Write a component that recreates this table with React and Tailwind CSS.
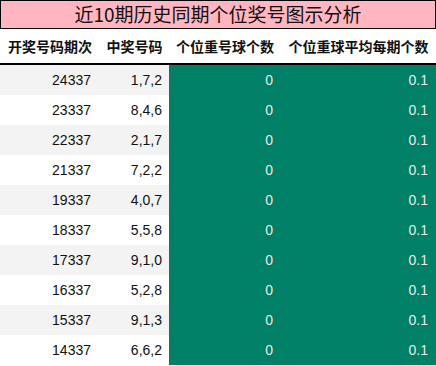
const rows = [
  ['24337', '1,7,2'],
  ['23337', '8,4,6'],
  ['22337', '2,1,7'],
  ['21337', '7,2,2'],
  ['19337', '4,0,7'],
  ['18337', '5,5,8'],
  ['17337', '9,1,0'],
  ['16337', '5,2,8'],
  ['15337', '9,1,3'],
  ['14337', '6,6,2'],
]

export default function App() {
  return (
    <div className="w-[436px] h-[366px] bg-white overflow-hidden" style={{ fontFamily: '"Liberation Sans", "Noto Sans CJK SC", sans-serif' }}>
      <div
        className="h-[29px] border border-black bg-[#ffb6c1] flex items-center justify-center text-[19px] text-[#111]"
        style={{ fontFamily: '"Noto Sans CJK SC", sans-serif' }}
      >
        近10期历史同期个位奖号图示分析
      </div>

      <div
        className="grid grid-cols-[100px_69px_112px_1fr] h-[36px] border-b-2 border-black text-[14px] font-bold text-[#111] items-center text-center"
        style={{ fontFamily: '"Noto Sans CJK SC", sans-serif' }}
      >
        <div>开奖号码期次</div>
        <div>中奖号码</div>
        <div>个位重号球个数</div>
        <div>个位重球平均每期个数</div>
      </div>

      {rows.map(([issue, nums], i) => (
        <div
          key={issue}
          className={`grid grid-cols-[100px_69px_112px_1fr] h-[30px] items-stretch text-[14px] ${i % 2 === 0 ? 'bg-[#f3f3f3]' : 'bg-white'}`}
        >
          <div className="flex items-center justify-end pr-[9px] text-[#111]">{issue}</div>
          <div className="flex items-center justify-end pr-[7px] text-[#111]">{nums}</div>
          <div className="flex items-center justify-end pr-2 bg-[#008066] text-[#e6ece9]">0</div>
          <div className="flex items-center justify-end pr-2 bg-[#008066] text-[#e6ece9]">0.1</div>
        </div>
      ))}
    </div>
  )
}
